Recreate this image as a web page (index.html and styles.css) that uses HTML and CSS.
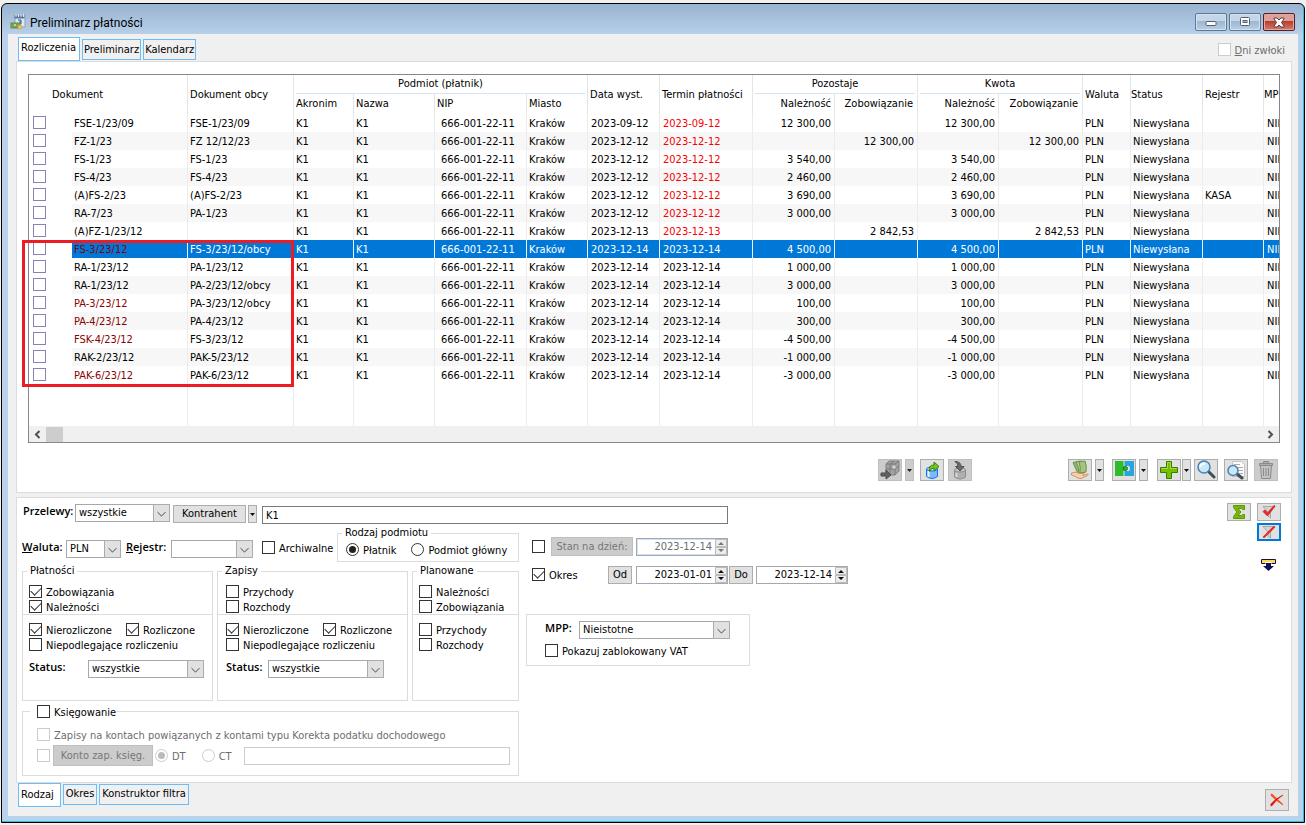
FILE: index.html
```html
<!DOCTYPE html>
<html lang="pl">
<head>
<meta charset="utf-8">
<title>Preliminarz płatności</title>
<link rel="stylesheet" href="styles.css">
</head>
<body>
<div class="window">
<header class="titlebar">
  <svg class="app-icon" width="16" height="16" viewBox="0 0 16 16"><rect x="5" y="1" width="10" height="12" fill="#dfe8f1" stroke="#8ba3bb"/><path d="M4.500 1.500h10v3h-10z" fill="#55779b"/><path d="M6 0v3M8.500 0v3M11 0v3M13.500 0v3" stroke="#dfe8f1"/><path d="M8 6h3v4H8M9 8h2" fill="none" stroke="#33577e"/><rect x="1" y="9" width="9" height="5" fill="#78a255" stroke="#638c49"/><circle cx="5" cy="11" r="1" fill="#d6e3b5"/><circle cx="10" cy="13" r="2" fill="#efc75c" stroke="#d3ad52"/></svg>
  <h1 class="title">Preliminarz płatności</h1>
  <button class="win-btn" aria-label="Minimalizuj"><svg width="12" height="10" viewBox="0 0 12 10"><rect x="1" y="4.500" width="10" height="4" rx="1" fill="#fff" stroke="#54606e"/></svg></button>
  <button class="win-btn" aria-label="Maksymalizuj"><svg width="12" height="10" viewBox="0 0 12 10"><rect x="1.500" y="0.500" width="9" height="8" rx="1" fill="#fff" stroke="#54606e"/><rect x="4" y="3.500" width="4" height="2" fill="#9db7d3" stroke="#54606e"/></svg></button>
  <button class="win-btn win-close" aria-label="Zamknij okno"><svg width="14" height="11" viewBox="0 0 14 11"><path d="M2 1h3l2 2 2-2h3v1L9.500 5.500 12 9v1H9L7 8l-2 2H2V9l2.500-3.500L2 2z" fill="#fff" stroke="#5b3a3e"/></svg></button>
</header>
<main class="client">
  <div class="top-strip">
    <nav class="tabs tabs-top">
      <button class="tab active">Rozliczenia</button><button class="tab">Preliminarz</button><button class="tab">Kalendarz</button>
    </nav>
    <label class="check dim late"><input type="checkbox" disabled><span><u>D</u>ni zwłoki</span></label>
  </div>
  <section class="panel list-panel">
    <div class="grid-wrap">
    <div class="grid-box">
    <div class="grid-view">
    <table class="grid">
      <colgroup><col class="w43"><col class="w115"><col class="w106"><col class="w60"><col class="w81"><col class="w92"><col class="w61"><col class="w72"><col class="w93"><col class="w82"><col class="w83"><col class="w81"><col class="w84"><col class="w48"><col class="w72"><col class="w61"><col></colgroup>
      <thead>
        <tr class="h1"><th colspan="2" rowspan="2" class="doc-head">Dokument</th><th rowspan="2">Dokument obcy</th><th colspan="4" class="group"><span>Podmiot (płatnik)</span></th><th rowspan="2">Data wyst.</th><th rowspan="2">Termin płatności</th><th colspan="2" class="group"><span>Pozostaje</span></th><th colspan="2" class="group"><span>Kwota</span></th><th rowspan="2">Waluta</th><th rowspan="2" class="tight">Status</th><th rowspan="2">Rejestr</th><th rowspan="2" class="tight">MPP</th></tr>
        <tr class="h2"><th>Akronim</th><th>Nazwa</th><th>NIP</th><th>Miasto</th><th class="num">Należność</th><th class="num zob">Zobowiązanie</th><th class="num">Należność</th><th class="num zob">Zobowiązanie</th></tr>
      </thead>
      <tbody>
        <tr><td><input type="checkbox" aria-label="FSE-1/23/09"></td><td>FSE-1/23/09</td><td>FSE-1/23/09</td><td>K1</td><td>K1</td><td>666-001-22-11</td><td>Kraków</td><td>2023-09-12</td><td class="due">2023-09-12</td><td>12 300,00</td><td></td><td>12 300,00</td><td></td><td>PLN</td><td>Niewysłana</td><td></td><td>NIE</td></tr>
        <tr><td><input type="checkbox" aria-label="FZ-1/23"></td><td>FZ-1/23</td><td>FZ 12/12/23</td><td>K1</td><td>K1</td><td>666-001-22-11</td><td>Kraków</td><td>2023-12-12</td><td class="due">2023-12-12</td><td></td><td>12 300,00</td><td></td><td>12 300,00</td><td>PLN</td><td>Niewysłana</td><td></td><td>NIE</td></tr>
        <tr><td><input type="checkbox" aria-label="FS-1/23"></td><td>FS-1/23</td><td>FS-1/23</td><td>K1</td><td>K1</td><td>666-001-22-11</td><td>Kraków</td><td>2023-12-12</td><td class="due">2023-12-12</td><td>3 540,00</td><td></td><td>3 540,00</td><td></td><td>PLN</td><td>Niewysłana</td><td></td><td>NIE</td></tr>
        <tr><td><input type="checkbox" aria-label="FS-4/23"></td><td>FS-4/23</td><td>FS-4/23</td><td>K1</td><td>K1</td><td>666-001-22-11</td><td>Kraków</td><td>2023-12-12</td><td class="due">2023-12-12</td><td>2 460,00</td><td></td><td>2 460,00</td><td></td><td>PLN</td><td>Niewysłana</td><td></td><td>NIE</td></tr>
        <tr><td><input type="checkbox" aria-label="(A)FS-2/23"></td><td>(A)FS-2/23</td><td>(A)FS-2/23</td><td>K1</td><td>K1</td><td>666-001-22-11</td><td>Kraków</td><td>2023-12-12</td><td class="due">2023-12-12</td><td>3 690,00</td><td></td><td>3 690,00</td><td></td><td>PLN</td><td>Niewysłana</td><td>KASA</td><td>NIE</td></tr>
        <tr><td><input type="checkbox" aria-label="RA-7/23"></td><td>RA-7/23</td><td>PA-1/23</td><td>K1</td><td>K1</td><td>666-001-22-11</td><td>Kraków</td><td>2023-12-12</td><td class="due">2023-12-12</td><td>3 000,00</td><td></td><td>3 000,00</td><td></td><td>PLN</td><td>Niewysłana</td><td></td><td>NIE</td></tr>
        <tr><td><input type="checkbox" aria-label="(A)FZ-1/23/12"></td><td>(A)FZ-1/23/12</td><td></td><td>K1</td><td>K1</td><td>666-001-22-11</td><td>Kraków</td><td>2023-12-13</td><td class="due">2023-12-13</td><td></td><td>2 842,53</td><td></td><td>2 842,53</td><td>PLN</td><td>Niewysłana</td><td></td><td>NIE</td></tr>
        <tr class="selected"><td><input type="checkbox" aria-label="FS-3/23/12"></td><td class="corr">FS-3/23/12</td><td>FS-3/23/12/obcy</td><td>K1</td><td>K1</td><td>666-001-22-11</td><td>Kraków</td><td>2023-12-14</td><td>2023-12-14</td><td>4 500,00</td><td></td><td>4 500,00</td><td></td><td>PLN</td><td>Niewysłana</td><td></td><td>NIE</td></tr>
        <tr><td><input type="checkbox" aria-label="RA-1/23/12"></td><td>RA-1/23/12</td><td>PA-1/23/12</td><td>K1</td><td>K1</td><td>666-001-22-11</td><td>Kraków</td><td>2023-12-14</td><td>2023-12-14</td><td>1 000,00</td><td></td><td>1 000,00</td><td></td><td>PLN</td><td>Niewysłana</td><td></td><td>NIE</td></tr>
        <tr><td><input type="checkbox" aria-label="RA-1/23/12"></td><td>RA-1/23/12</td><td>PA-2/23/12/obcy</td><td>K1</td><td>K1</td><td>666-001-22-11</td><td>Kraków</td><td>2023-12-14</td><td>2023-12-14</td><td>3 000,00</td><td></td><td>3 000,00</td><td></td><td>PLN</td><td>Niewysłana</td><td></td><td>NIE</td></tr>
        <tr><td><input type="checkbox" aria-label="PA-3/23/12"></td><td class="corr">PA-3/23/12</td><td>PA-3/23/12/obcy</td><td>K1</td><td>K1</td><td>666-001-22-11</td><td>Kraków</td><td>2023-12-14</td><td>2023-12-14</td><td>100,00</td><td></td><td>100,00</td><td></td><td>PLN</td><td>Niewysłana</td><td></td><td>NIE</td></tr>
        <tr><td><input type="checkbox" aria-label="PA-4/23/12"></td><td class="corr">PA-4/23/12</td><td>PA-4/23/12</td><td>K1</td><td>K1</td><td>666-001-22-11</td><td>Kraków</td><td>2023-12-14</td><td>2023-12-14</td><td>300,00</td><td></td><td>300,00</td><td></td><td>PLN</td><td>Niewysłana</td><td></td><td>NIE</td></tr>
        <tr><td><input type="checkbox" aria-label="FSK-4/23/12"></td><td class="corr">FSK-4/23/12</td><td>FS-3/23/12</td><td>K1</td><td>K1</td><td>666-001-22-11</td><td>Kraków</td><td>2023-12-14</td><td>2023-12-14</td><td>-4 500,00</td><td></td><td>-4 500,00</td><td></td><td>PLN</td><td>Niewysłana</td><td></td><td>NIE</td></tr>
        <tr><td><input type="checkbox" aria-label="RAK-2/23/12"></td><td>RAK-2/23/12</td><td>PAK-5/23/12</td><td>K1</td><td>K1</td><td>666-001-22-11</td><td>Kraków</td><td>2023-12-14</td><td>2023-12-14</td><td>-1 000,00</td><td></td><td>-1 000,00</td><td></td><td>PLN</td><td>Niewysłana</td><td></td><td>NIE</td></tr>
        <tr><td><input type="checkbox" aria-label="PAK-6/23/12"></td><td class="corr">PAK-6/23/12</td><td>PAK-6/23/12</td><td>K1</td><td>K1</td><td>666-001-22-11</td><td>Kraków</td><td>2023-12-14</td><td>2023-12-14</td><td>-3 000,00</td><td></td><td>-3 000,00</td><td></td><td>PLN</td><td>Niewysłana</td><td></td><td>NIE</td></tr>
        <tr class="filler"><td></td><td></td><td></td><td></td><td></td><td></td><td></td><td></td><td></td><td></td><td></td><td></td><td></td><td></td><td></td><td></td><td></td></tr>
      </tbody>
    </table>
    </div>
    <div class="hscroll">
      <button class="sb-arrow" aria-label="W lewo"><svg width="7" height="9" viewBox="0 0 7 9"><path d="M5.500 1 2 4.500 5.500 8" fill="none" stroke="#505050" stroke-width="2"/></svg></button>
      <span class="sb-thumb"></span>
      <button class="sb-arrow sb-right" aria-label="W prawo"><svg width="7" height="9" viewBox="0 0 7 9"><path d="M1.500 1 5 4.500 1.500 8" fill="none" stroke="#505050" stroke-width="2"/></svg></button>
    </div>
    </div>
    <div class="marker"></div>
    </div>
    <div class="toolbar">
      <div class="tool-set first">
        <button class="tool off" disabled aria-label="Eksport"><svg width="20" height="20" viewBox="0 0 20 20"><path d="M6 4 9 1h10v10l-4 4H6z" fill="#a2a2a2" stroke="#808080"/><path d="M6 4h9v11M15 4l4-3M10 4l4-3M10 4v11M6 9h9l4-3" fill="none" stroke="#7a7a7a"/><rect x="12" y="5" width="4" height="4" rx="1" fill="#d8d8d8" stroke="#909090"/><path d="M1 13h5v-3l5 5-5 4v-3H1z" fill="#606060" stroke="#4c4c4c"/></svg></button>
        <button class="drop off" disabled aria-label="Eksport – menu"><svg width="5" height="3" viewBox="0 0 5 3"><path d="M0 0h5L2.500 3z" fill="#222"/></svg></button>
      </div>
      <div class="tool-set second">
        <button class="tool" aria-label="Wyślij"><svg width="20" height="20" viewBox="0 0 20 20"><path d="M4.500 9v7.500q5.500 4 11 0V9" fill="#7db9ff" stroke="#1673e6"/><ellipse cx="10" cy="9" rx="5.500" ry="2" fill="#c9e5ff" stroke="#1673e6"/><path d="M6.500 11v6" stroke="#e8f5ff" stroke-width="2"/><path d="M7.500 11.500Q6 5 12 5V2l5 4.500-5 4.500V8Q9 8 7.500 11.500z" fill="#76c421" stroke="#347f08"/></svg></button>
        <button class="tool off" disabled aria-label="Pobierz"><svg width="20" height="20" viewBox="0 0 20 20"><path d="M4.500 10v7q5.500 4 11 0v-7" fill="#b0b0b0" stroke="#8c8c8c"/><ellipse cx="10" cy="10" rx="5.500" ry="2" fill="#c7c7c7" stroke="#8c8c8c"/><path d="M6.500 13v4" stroke="#d6d6d6" stroke-width="2"/><path d="M5 1.500q6 0 6 5h3L10 11 5.500 6.500H8q0-3-3-5z" fill="#6a6a6a" stroke="#505050"/></svg></button>
      </div>
      <div class="tool-set third">
        <button class="tool" aria-label="Zapłać"><svg width="20" height="20" viewBox="0 0 20 20"><path d="M3 2.500 10 1q3 4 4 11l-6 1Q6 10 3 2.500z" fill="#93b86a" stroke="#6c9150"/><path d="M6 2l6-1q3 4 3 11l-6 1Q9 8 6 2z" fill="#b2cf85" stroke="#6c9150"/><path d="M9 2l6-1q2 4 1 11l-6 1Q11 7 9 2z" fill="#a5c47a" stroke="#6c9150"/><path d="M1.500 15v-2q4-2 8 .5h4q1 1-1 2l5-1.500q1.500 0 0 1.500l-6 3q-4 0-6-2z" fill="#f5d0ae" stroke="#cf9263"/></svg></button>
        <button class="drop" aria-label="Zapłać – menu"><svg width="5" height="3" viewBox="0 0 5 3"><path d="M0 0h5L2.500 3z" fill="#111"/></svg></button>
      </div>
      <div class="tool-set match">
        <button class="tool" aria-label="Rozlicz"><svg width="20" height="20" viewBox="0 0 20 20"><path d="M10 1h10v15H10z" fill="#26a6d9"/><path d="M1 1h9v15H1z" fill="#30bb2c"/><path d="M10 6.500q0 1 2 0 4-2 4 2t-4 2q-2-1-2 0z" fill="#e1e1e1"/><path d="M9.500 7.500q4-2 4 1t-4 1z" fill="#30bb2c" stroke="#12701a"/><path d="M10 1v5M10 11v5" stroke="#e1e1e1"/></svg></button>
        <button class="drop" aria-label="Rozlicz – menu"><svg width="5" height="3" viewBox="0 0 5 3"><path d="M0 0h5L2.500 3z" fill="#111"/></svg></button>
      </div>
      <div class="tool-set plus">
        <button class="tool" aria-label="Dodaj"><svg width="20" height="20" viewBox="0 0 20 20"><path d="M7.500 1.500h5v6h6v5h-6v6h-5v-6h-6v-5h6z" fill="#76c000" stroke="#387c05"/><path d="M8.500 8.500v-6h3v6h6M2.500 8.500h6" fill="none" stroke="#a8dd3c"/></svg></button>
        <button class="drop" aria-label="Dodaj – menu"><svg width="5" height="3" viewBox="0 0 5 3"><path d="M0 0h5L2.500 3z" fill="#111"/></svg></button>
      </div>
      <button class="tool look" aria-label="Podgląd"><svg width="20" height="20" viewBox="0 0 20 20"><path d="m13 12 5 5" stroke="#454d57" stroke-width="3" stroke-linecap="round"/><circle cx="8" cy="7" r="6" fill="#c7e8fb" stroke="#4a7fb0" stroke-width="1.500"/><path d="M4 7q1-4 5-3" fill="none" stroke="#fff" stroke-width="2"/></svg></button>
      <button class="tool" aria-label="Podgląd dokumentu"><svg width="20" height="20" viewBox="0 0 20 20"><path d="M6.500 1.500h9l3 3v12h-12z" fill="#fbfbfb" stroke="#c4c4c4"/><path d="M8 4.500h6M9 7.500h8M12 10.500h5M13 13.500h4" stroke="#aaa"/><path d="m11 14 5 4" stroke="#454d57" stroke-width="3" stroke-linecap="round"/><circle cx="7" cy="10.500" r="5" fill="#c7e8fb" stroke="#4a7fb0" stroke-width="1.500"/></svg></button>
      <button class="tool off" disabled aria-label="Usuń"><svg width="20" height="20" viewBox="0 0 20 20"><path d="M4.500 5.500h11l-1 13h-9z" fill="#c2c2c2" stroke="#8b8b8b"/><path d="M7.500 8v8M10 8v8M12.500 8v8" stroke="#8b8b8b"/><path d="M3.500 3.500h13v2h-13zM7.500 3.500v-2h5v2" fill="#adadad" stroke="#8b8b8b"/></svg></button>
    </div>
  </section>

  <section class="panel filter-panel">
    <form class="filters">
      <div class="transfer-row">
        <label class="strong first-label" for="przelewy">Przelewy:</label>
        <span class="combo w95"><select id="przelewy"><option>wszystkie</option></select><svg viewBox="0 0 17 18"><path d="m4 8 4.500 4.500L13 8"/></svg></span>
        <button type="button" class="btn contractor">Kontrahent</button>
        <button type="button" class="drop low" aria-label="Kontrahent – menu"><svg width="5" height="3" viewBox="0 0 5 3"><path d="M0 0h5L2.500 3z" fill="#111"/></svg></button>
        <input class="field contractor-code" type="text" value="K1" aria-label="Kontrahent">
      </div>
      <div class="columns">
        <div class="left-col">
          <div class="currency-row">
            <label class="strong cur-label" for="waluta"><u>W</u>aluta:</label>
            <span class="combo w55"><select id="waluta"><option>PLN</option></select><svg viewBox="0 0 17 18"><path d="m4 8 4.500 4.500L13 8"/></svg></span>
            <label class="strong reg-label" for="rejestr"><u>R</u>ejestr:</label>
            <span class="combo w82"><select id="rejestr"><option></option></select><svg viewBox="0 0 17 18"><path d="m4 8 4.500 4.500L13 8"/></svg></span>
            <label class="check archive"><input type="checkbox"><span>Archiwalne</span></label>
            <fieldset class="subject"><legend>Rodzaj podmiotu</legend>
              <div class="radios"><label class="check"><input type="radio" name="podmiot" checked><span>Płatnik</span></label><label class="check"><input type="radio" name="podmiot"><span>Podmiot główny</span></label></div>
            </fieldset>
          </div>
          <div class="groups">
            <fieldset class="payments"><legend>Płatności</legend>
              <div class="part upper"><label class="check"><input type="checkbox" checked><span>Zobowiązania</span></label><label class="check"><input type="checkbox" checked><span>Należności</span></label></div>
              <div class="part lower"><div class="pair"><label class="check"><input type="checkbox" checked><span>Nierozliczone</span></label><label class="check"><input type="checkbox" checked><span>Rozliczone</span></label></div><label class="check"><input type="checkbox"><span>Niepodlegające rozliczeniu</span></label>
                <div class="status-row"><label class="strong" for="st1">Status:</label><span class="combo w116"><select id="st1"><option>wszystkie</option></select><svg viewBox="0 0 17 18"><path d="m4 8 4.500 4.500L13 8"/></svg></span></div></div>
            </fieldset>
            <fieldset class="entries"><legend>Zapisy</legend>
              <div class="part upper"><label class="check"><input type="checkbox"><span>Przychody</span></label><label class="check"><input type="checkbox"><span>Rozchody</span></label></div>
              <div class="part lower"><div class="pair"><label class="check"><input type="checkbox" checked><span>Nierozliczone</span></label><label class="check"><input type="checkbox" checked><span>Rozliczone</span></label></div><label class="check"><input type="checkbox"><span>Niepodlegające rozliczeniu</span></label>
                <div class="status-row"><label class="strong" for="st2">Status:</label><span class="combo w116"><select id="st2"><option>wszystkie</option></select><svg viewBox="0 0 17 18"><path d="m4 8 4.500 4.500L13 8"/></svg></span></div></div>
            </fieldset>
            <fieldset class="planned"><legend>Planowane</legend>
              <div class="part upper"><label class="check"><input type="checkbox"><span>Należności</span></label><label class="check"><input type="checkbox"><span>Zobowiązania</span></label></div>
              <div class="part lower"><label class="check"><input type="checkbox"><span>Przychody</span></label><label class="check"><input type="checkbox"><span>Rozchody</span></label></div>
            </fieldset>
          </div>
          <fieldset class="booking"><legend><label class="check"><input type="checkbox"><span>Księgowanie</span></label></legend>
            <label class="check dim"><input type="checkbox" disabled><span>Zapisy na kontach powiązanych z kontami typu Korekta podatku dochodowego</span></label>
            <div class="account-row">
              <input type="checkbox" disabled aria-label="Konto zapisu księgowego">
              <button type="button" class="btn account" disabled>Konto zap. księg.</button>
              <label class="check dim dt"><input type="radio" name="strona" checked disabled><span>DT</span></label>
              <label class="check dim"><input type="radio" name="strona" disabled><span>CT</span></label>
              <input class="field account-no" type="text" disabled aria-label="Numer konta">
            </div>
          </fieldset>
        </div>
        <div class="right-col">
          <div class="date-row">
            <input type="checkbox" aria-label="Stan na dzień">
            <button type="button" class="btn as-of" disabled>Stan na dzień:</button>
            <span class="date dim-date"><input type="text" value="2023-12-14" disabled aria-label="Stan na dzień"><svg viewBox="0 0 13 16"><path d="M1.500 .5h11v7h-11zM1.500 8.500h11v7h-11z" class="sp"/><path d="M4 6h6L7 3zM4 10h6l-3 3z"/></svg></span>
          </div>
          <div class="date-row period">
            <label class="check okres"><input type="checkbox" checked><span>Okres</span></label>
            <button type="button" class="btn small">Od</button>
            <span class="date"><input type="text" value="2023-01-01" aria-label="Od"><svg viewBox="0 0 13 16"><path d="M1.500 .5h11v7h-11zM1.500 8.500h11v7h-11z" class="sp"/><path d="M4 6h6L7 3zM4 10h6l-3 3z"/></svg></span>
            <button type="button" class="btn small to">Do</button>
            <span class="date"><input type="text" value="2023-12-14" aria-label="Do"><svg viewBox="0 0 13 16"><path d="M1.500 .5h11v7h-11zM1.500 8.500h11v7h-11z" class="sp"/><path d="M4 6h6L7 3zM4 10h6l-3 3z"/></svg></span>
          </div>
          <div class="mpp">
            <div class="mpp-row"><label class="strong" for="mpp">MPP:</label><span class="combo w151"><select id="mpp"><option>Nieistotne</option></select><svg viewBox="0 0 17 18"><path d="m4 8 4.500 4.500L13 8"/></svg></span></div>
            <label class="check"><input type="checkbox"><span>Pokazuj zablokowany VAT</span></label>
          </div>
        </div>
      </div>
    </form>
    <div class="actions">
      <button class="tool short" aria-label="Suma"><svg width="14" height="14" viewBox="0 0 14 14"><path d="M1.500 .5h11v4h-2l-1-1H6L9 7l-3 3.500h3.500l1-1h2v4h-11v-2L5 7 1.500 2.500z" fill="#78b800" stroke="#5c960c"/></svg></button>
      <div class="stack">
        <button class="tool short" aria-label="Zastosuj filtr"><svg width="16" height="16" viewBox="0 0 16 16"><path d="M2 2.500h12L9.500 8v6L7 12V8z" fill="#d2d2d2" stroke="#a8a8a8"/><path d="M2 7.500 4 6l2.500 3L13 1.500l1 .5-7.500 10z" fill="#e42a2a" stroke="#e42a2a"/></svg></button>
        <button class="tool short focus" aria-label="Wyczyść filtr"><svg width="16" height="16" viewBox="0 0 16 16"><path d="M2 2.500h12L9.500 8v6L7 12V8z" fill="#d2d2d2" stroke="#a8a8a8"/><path d="M3 13 13 3" stroke="#e42a2a" stroke-width="2" stroke-linecap="round"/></svg></button>
        <button class="plain" aria-label="Zwiń filtr"><svg width="16" height="13" viewBox="0 0 16 13"><path d="M.5 1.500h14v4H.5z" fill="#ffd84c" stroke="#10105a"/><path d="M4.500 4h6v4h3l-6 5-6-5h3z" fill="#fff"/><path d="M5 5h5v3h3l-5.500 5L2 8h3z" fill="#10105a"/></svg></button>
      </div>
    </div>
  </section>
  <div class="bottom-strip">
    <nav class="tabs tabs-bottom">
      <button class="tab active">Rodzaj</button><button class="tab">Okres</button><button class="tab">Konstruktor filtra</button>
    </nav>
    <button class="tool exit" aria-label="Zamknij"><svg width="16" height="16" viewBox="0 0 16 16"><path d="M1.500 2Q3 1 4.500 3q4 4 9.500 9l0 1.500Q8 10 2 4z" fill="#f55423"/><path d="M1.500 14V12Q7 6 14 2.500v1Q8 7 4 13q-1 1.500-2.500 1z" fill="#e8150c"/></svg></button>
  </div>
</main>
</div>
</body>
</html>
```
FILE: styles.css
```css
* { box-sizing: border-box; }
body {
  margin: 0;
  padding: 3px 1px 2px;
  min-height: 100vh;
  display: flex;
  background: #f0f0f0;
  font: 11px/14px "DejaVu Sans Condensed", Tahoma, sans-serif;
  color: #000;
}
button, input, select { font: inherit; color: inherit; margin: 0; padding: 0; }
button { display: flex; align-items: center; justify-content: center; flex: none; }
svg { display: block; flex: none; }

.window {
  flex: 1;
  min-width: 0;
  display: flex;
  flex-direction: column;
  border: 1px solid #000;
  border-radius: 6px 6px 0 0;
  padding: 0 6px 6px;
  background: linear-gradient(#99b4d1, #b9d1ea 32px);
  box-shadow: inset -1px -1px #35b8d8;
}
.titlebar { display: flex; align-items: center; height: 30px; gap: 2px; padding: 6px 3px 0 2px; }
.title { flex: 1; margin: 2px 0 0 2px; font: 12px/16px Roboto, "Open Sans", sans-serif; }
.win-btn {
  width: 32px;
  height: 18px;
  border: 1px solid #5d7894;
  border-radius: 2px;
  background: linear-gradient(#c5d6e8 45%, #9cb7d2 46%, #b8cfe6);
  box-shadow: inset 0 0 0 1px #d5e3f1;
}
.win-close { border-color: #571e26; background: linear-gradient(#dda199 45%, #b93b2b 46%, #d08070); box-shadow: inset 0 0 0 1px #e5a79e; }

.client { flex: 1; display: flex; flex-direction: column; padding: 3px 6px 4px 8px; background: #f0f0f0; }
.top-strip { display: flex; justify-content: space-between; height: 24px; padding-right: 7px; }
.tabs { display: flex; gap: 2px; padding-left: 2px; }
.tabs-top { align-items: flex-end; }
.tab { height: 21px; padding: 0 1px; border: 1px solid #6cbcf8; background: #f0f0f0; }
.tab.active { background: #fff; }
.tabs-top .tab { margin-bottom: 1px; }
.tabs-top .tab.active { height: 24px; margin: 0; padding: 0 3px 3px 2px; }
.tabs-bottom .tab { padding: 0 2px 2px; margin-top: 1px; }
.tabs-bottom .tab.active { height: 24px; margin-top: 0; padding: 0 6px 0 2px; }

.panel { background: #fff; border: 1px solid #dcdcdc; }
.list-panel { padding: 12px 11px 11px; }
.grid-wrap { position: relative; }
.grid-box { border: 1px solid #828790; }
.grid-view { overflow: hidden; }
.grid { width: 100%; min-width: 1284px; table-layout: fixed; border-collapse: separate; border-spacing: 0; }
.w43 { width: 43px; } .w115 { width: 115px; } .w106 { width: 106px; } .w60 { width: 60px; }
.w81 { width: 81px; } .w92 { width: 92px; } .w61 { width: 61px; } .w72 { width: 72px; }
.w93 { width: 93px; } .w82 { width: 82px; } .w83 { width: 83px; } .w84 { width: 84px; } .w48 { width: 48px; }
.grid th { font-weight: normal; text-align: left; padding: 0 0 0 2px; border-left: 1px solid #e5e5e5; white-space: nowrap; line-height: 14px; }
.grid th.doc-head { padding-left: 23px; border-left: 0; }
.grid th.tight { padding-left: 0; }
.grid th.group { padding: 0 2px; text-align: center; }
.grid th.group span { display: block; height: 19px; line-height: 18px; border-bottom: 1px solid #d7e5f3; }
.grid th.num { text-align: right; padding-right: 3px; }
.grid th.zob { padding-right: 4px; }
.h2 th { height: 20px; }
.grid td { height: 18px; padding: 1px 3px 0 2px; border-left: 1px solid #ececec; white-space: nowrap; overflow: hidden; }
.grid td:first-child, .grid td:nth-child(2) { border-left: 0; }
.grid td:first-child { padding: 0 0 0 4px; }
.grid td:nth-child(6) { padding-left: 6px; }
.grid td:nth-child(8), .grid td:nth-child(9), .grid td:nth-child(17) { padding-left: 3px; }
.grid td:nth-child(n+10):nth-child(-n+13) { text-align: right; padding-left: 0; }
.grid tbody tr:nth-child(even) td:nth-child(n+2) { background: #f7f7f7; }
.grid tbody tr.selected td:nth-child(n+2) { background: #0078d7; color: #fff; border-color: #e8f3fc; }
.grid tbody tr.filler td:nth-child(n+2) { background: #fff; }
.grid .filler td { height: 42px; }
.grid .due { color: #f80000; }
.grid td.corr, .grid tbody tr.selected td.corr { color: #8b0000; }
.grid td input { margin-bottom: 2px; border-color: #8b81b5; }

.hscroll { display: flex; align-items: center; height: 16px; background: #f0f0f0; }
.sb-arrow { width: 17px; height: 16px; border: 0; background: none; }
.sb-thumb { width: 17px; height: 15px; background: #cdcdcd; }
.sb-right { margin-left: auto; }
.marker { position: absolute; left: -6px; top: 166px; width: 272px; height: 147px; border: 3px solid #ed1c24; pointer-events: none; }

.toolbar { display: flex; justify-content: flex-end; padding: 16px 2px 0 0; gap: 6px; }
.tool-set { display: flex; gap: 3px; }
.tool-set.second { gap: 4px; }
.tool-set.third { margin-left: 90px; }
.tool-set.match { margin-left: 2px; }
.tool-set.plus { gap: 1px; margin: 0 -3px 0 3px; }
.tool { width: 24px; height: 22px; border: 1px solid #adadad; background: #e1e1e1; }
.tool.short { height: 18px; }
.tool.off, .drop.off { background: #ccc; border-color: #bfbfbf; }
.tool.focus { border: 2px solid #0078d7; }
.drop { width: 9px; height: 22px; border: 1px solid #adadad; background: #e1e1e1; }

.filter-panel { margin-top: 4px; display: flex; justify-content: space-between; padding: 5px 10px 6px 5px; }
.transfer-row { display: flex; align-items: flex-start; height: 22px; padding-top: 1px; }
.strong { font-family: "Open Sans", sans-serif; font-weight: 600; }
.first-label { width: 53px; padding-left: 1px; }
.combo { display: grid; height: 18px; flex: none; }
.combo select { grid-area: 1 / 1; width: 100%; height: 18px; appearance: none; border: 1px solid #a5a8ad; border-radius: 0; background: #fff; padding-left: 3px; }
.combo svg { grid-area: 1 / 1; justify-self: end; width: 17px; height: 18px; background: #e1e1e1; border: 1px solid #a9abb0; pointer-events: none; }
.combo path { fill: none; stroke: #333; stroke-width: 1px; }
.w95 { width: 95px; } .w55 { width: 55px; } .combo.w82 { width: 82px; } .w116 { width: 116px; } .w151 { width: 151px; }
.btn { height: 18px; border: 1px solid #adadad; background: #e1e1e1; white-space: nowrap; }
.btn:disabled { background: #ccc; border-color: #bfbfbf; color: #777; }
.contractor { width: 73px; margin: 1px 2px 0 3px; }
.drop.low { height: 18px; margin-top: 1px; }
.field { height: 18px; border: 1px solid #7a7a7a; background: #fff; padding: 0 3px; }
.field:disabled { border-color: #ccc; }
.contractor-code { width: 466px; margin: 2px 0 0 5px; }

.check { display: flex; align-items: center; gap: 4px; height: 15px; white-space: nowrap; }
.check span { padding-top: 2px; }
.dim { color: #6d6d6d; }
.late { margin: 5px 0 0; }
input[type=checkbox], input[type=radio] { appearance: none; flex: none; display: grid; place-items: center; width: 13px; height: 13px; border: 1px solid #333; background: #fff; }
input[type=radio] { border-radius: 50%; }
input[type=checkbox]:checked::after { content: ""; width: 9px; height: 5px; margin-bottom: 3px; border: solid #333; border-width: 0 0 1px 1px; transform: rotate(-45deg); }
input[type=radio]:checked::after { content: ""; width: 7px; height: 7px; border-radius: 50%; background: #222; }
input[type=checkbox]:disabled, input[type=radio]:disabled { border-color: #ccc; }
input[type=radio]:disabled::after { background: #bbb; }

.columns { display: grid; grid-template-columns: 497px auto; gap: 7px; }
.left-col { display: flex; flex-direction: column; }
fieldset { margin: 0; padding: 0; border: 1px solid #dcdcdc; min-width: 0; }
legend { padding: 0 3px; margin-left: 4px; line-height: 14px; }
.currency-row { display: flex; align-items: flex-start; padding-top: 15px; height: 37px; }
.cur-label { width: 44px; }
.reg-label { width: 45px; margin-left: 5px; }
.archive { margin-left: 9px; }
.subject { width: 182px; margin: -14px 0 0 auto; height: 36px; }
.radios { display: flex; gap: 15px; padding: 2px 0 0 8px; }
.groups { display: grid; grid-template-columns: 191px 191px 107px; gap: 4px; padding-top: 2px; }
.groups fieldset { height: 137px; }
.part { padding: 0 6px; }
.entries .part { padding-left: 8px; }
.upper { padding-top: 6px; height: 36px; }
.part.lower { border-top: 1px solid #dcdcdc; padding-top: 7px; }
.pair { display: grid; grid-template-columns: 97px auto; }
.status-row { display: flex; padding-top: 8px; }
.status-row .strong { width: 59px; }
.entries .status-row .strong { width: 42px; }
.booking { margin-top: 3px; padding: 0 8px 9px 14px; }
.booking legend { margin-left: -7px; padding: 0 0 0 7px; }
.booking legend .check { height: 15px; }
.booking > .check { margin-top: 8px; }
.account-row { display: flex; align-items: center; padding-top: 3px; }
.account { width: 100px; height: 21px; margin: 0 2px 0 3px; }
.dt { margin-right: 16px; }
.account-no { flex: 1; margin-left: 12px; }

.right-col { padding-top: 12px; }
.date-row { display: flex; align-items: center; height: 19px; padding-left: 6px; }
.as-of { width: 82px; height: 19px; margin: 0 3px 0 6px; }
.period { margin-top: 9px; }
.okres { width: 76px; }
.small { width: 24px; margin-right: 4px; }
.small.to { margin: 0 3px 0 1px; }
.date { display: flex; align-items: center; width: 92px; height: 18px; border: 1px solid #a5a8ad; background: #fff; }
.date input { flex: 1; min-width: 0; width: 0; height: 16px; border: 0; background: none; text-align: right; padding-right: 2px; }
.date svg { width: 13px; height: 16px; }
.date path { fill: #111; }
.date .sp { fill: #ececec; stroke: #bbb; }
.dim-date { color: #6d6d6d; box-shadow: inset 0 0 0 1px #cfe3f7; }
.dim-date path { fill: #777; }
.mpp { width: 224px; height: 52px; margin-top: 30px; padding: 6px 0 0 18px; border: 1px solid #dcdcdc; }
.mpp-row { display: flex; margin-bottom: 4px; }
.mpp-row .strong { width: 34px; }
.actions { display: flex; gap: 6px; align-items: flex-start; }
.stack { display: flex; flex-direction: column; gap: 2px; }
.plain { border: 0; background: none; margin-top: 15px; }

.bottom-strip { display: flex; justify-content: space-between; padding-right: 3px; }
.exit { margin-top: 6px; }
```
